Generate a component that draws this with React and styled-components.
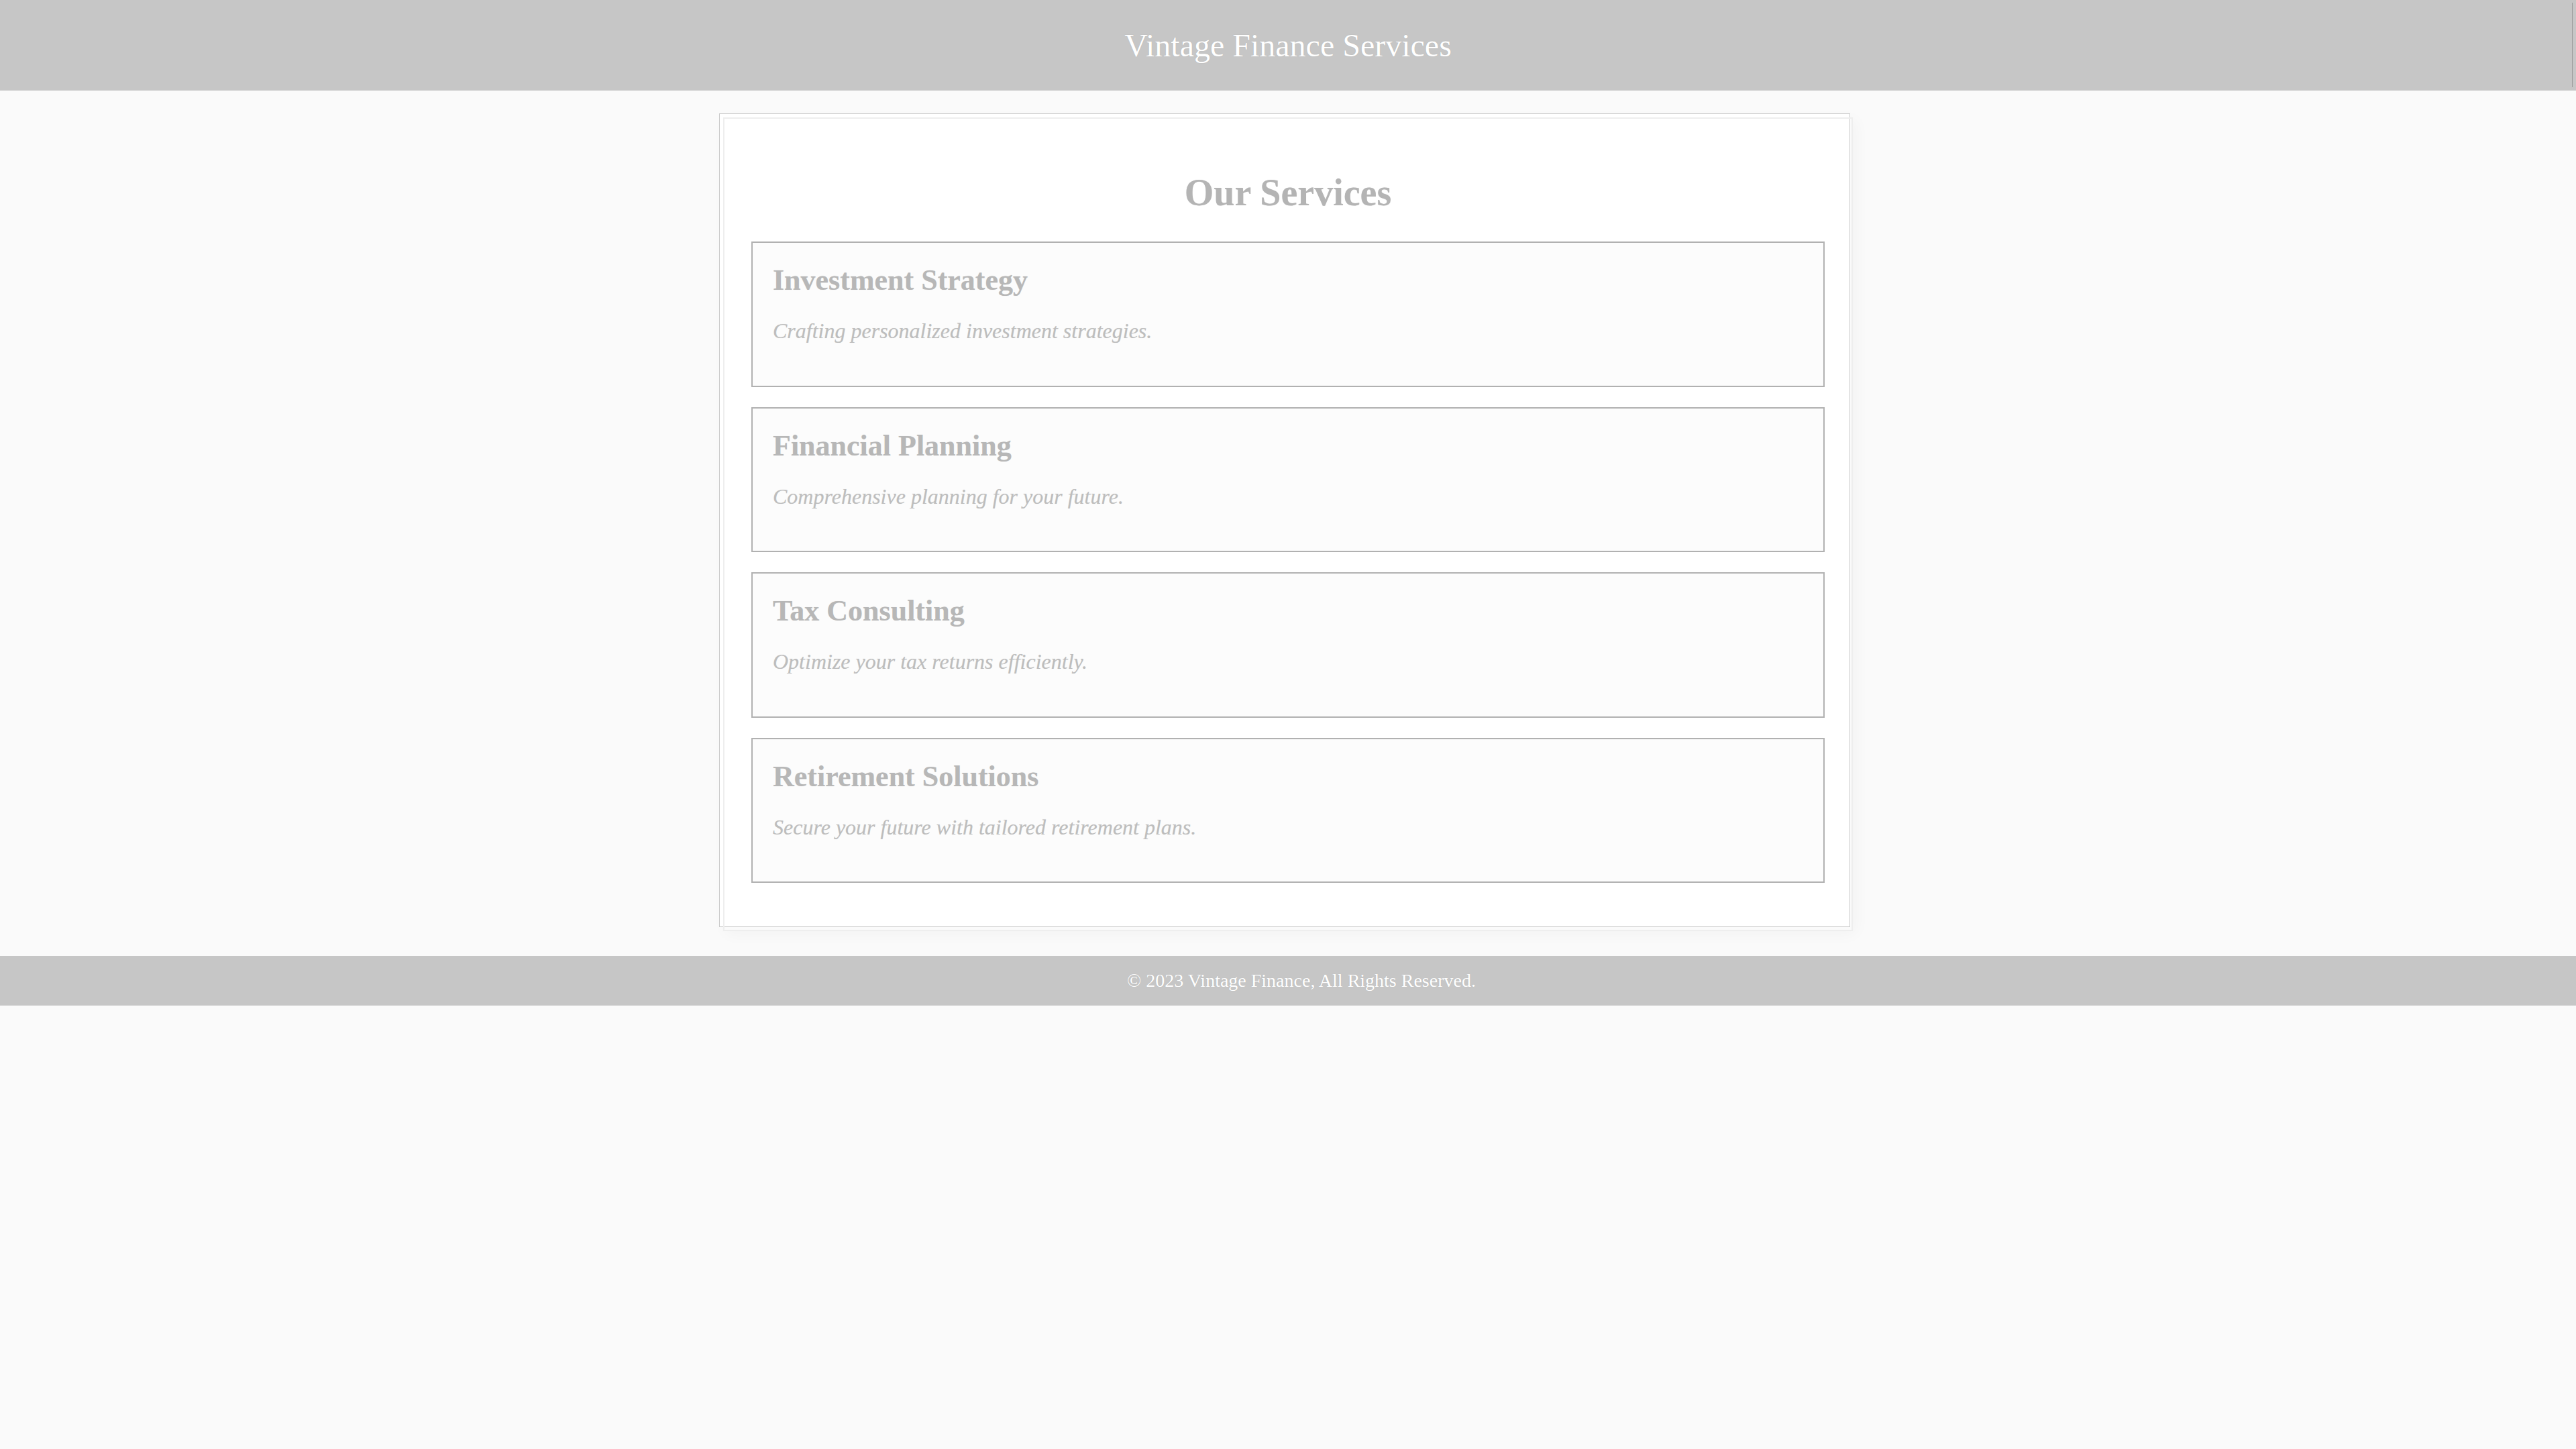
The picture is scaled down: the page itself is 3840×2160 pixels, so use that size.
import React from 'react';
import styled, { createGlobalStyle } from 'styled-components';

const GlobalStyle = createGlobalStyle`
  html, body {
    margin: 0;
    padding: 0;
    background: #fafafa;
    font-family: "Liberation Serif", "Times New Roman", serif;
  }
`;

const Header = styled.header`
  position: relative;
  background: #c6c6c6;
  padding: 40px 0;
  text-align: center;

  &::after {
    content: '';
    position: absolute;
    top: 4px;
    bottom: 5px;
    right: 5px;
    width: 1px;
    background: #9a9a9a;
  }
`;

const SiteTitle = styled.h1`
  margin: 0;
  font-size: 48px;
  font-weight: normal;
  color: #fff;
  text-shadow: 0 0 1px rgba(0, 0, 0, 0.18);
`;

const Main = styled.main`
  padding: 40px 0 37px;
`;

const Card = styled.section`
  position: relative;
  z-index: 0;
  width: 1600px;
  margin: 0 auto;
  padding: 42px;
  box-shadow: 4px 4px 22px rgba(0, 0, 0, 0.035);

  &::before {
    content: '';
    position: absolute;
    top: -6px;
    left: -6px;
    width: calc(100% + 2px);
    height: 100%;
    box-sizing: border-box;
    border: 1px solid #cbcbcb;
    background: #fff;
    z-index: -1;
  }

  &::after {
    content: '';
    position: absolute;
    inset: 0;
    border: 2px solid #eeeeee;
    z-index: -1;
  }
`;

const Heading = styled.h2`
  margin: 38px 0 41px;
  text-align: center;
  font-size: 56px;
  font-weight: bold;
  color: #b4b4b4;
  text-shadow: 0 0 1px rgba(0, 0, 0, 0.12);
`;

const ServiceBox = styled.div`
  background: #fcfcfc;
  border: 2px solid #b1b1b1;
  padding: 30px;
  margin-bottom: 30px;
`;

const ServiceTitle = styled.h3`
  margin: 0;
  font-size: 44px;
  font-weight: bold;
  color: #b7b7b7;
  text-shadow: 0 0 1px rgba(0, 0, 0, 0.12);
`;

const ServiceText = styled.p`
  margin: 32px 0 32.5px;
  font-size: 32px;
  font-style: italic;
  color: #bdbdbd;
  text-shadow: 0 0 1px rgba(0, 0, 0, 0.1);
`;

const Footer = styled.footer`
  background: #c6c6c6;
  padding: 21px 0 21px 40px;
  text-align: center;
`;

const FooterText = styled.p`
  margin: 0;
  font-size: 28px;
  color: #fff;
  text-shadow: 0 0 1px rgba(0, 0, 0, 0.15);
`;

const services = [
  { title: 'Investment Strategy', text: 'Crafting personalized investment strategies.' },
  { title: 'Financial Planning', text: 'Comprehensive planning for your future.' },
  { title: 'Tax Consulting', text: 'Optimize your tax returns efficiently.' },
  { title: 'Retirement Solutions', text: 'Secure your future with tailored retirement plans.' },
];

export default function App() {
  return (
    <>
      <GlobalStyle />
      <Header>
        <SiteTitle>Vintage Finance Services</SiteTitle>
      </Header>
      <Main>
        <Card>
          <Heading>Our Services</Heading>
          {services.map((s) => (
            <ServiceBox key={s.title}>
              <ServiceTitle>{s.title}</ServiceTitle>
              <ServiceText>{s.text}</ServiceText>
            </ServiceBox>
          ))}
        </Card>
      </Main>
      <Footer>
        <FooterText>© 2023 Vintage Finance, All Rights Reserved.</FooterText>
      </Footer>
    </>
  );
}
